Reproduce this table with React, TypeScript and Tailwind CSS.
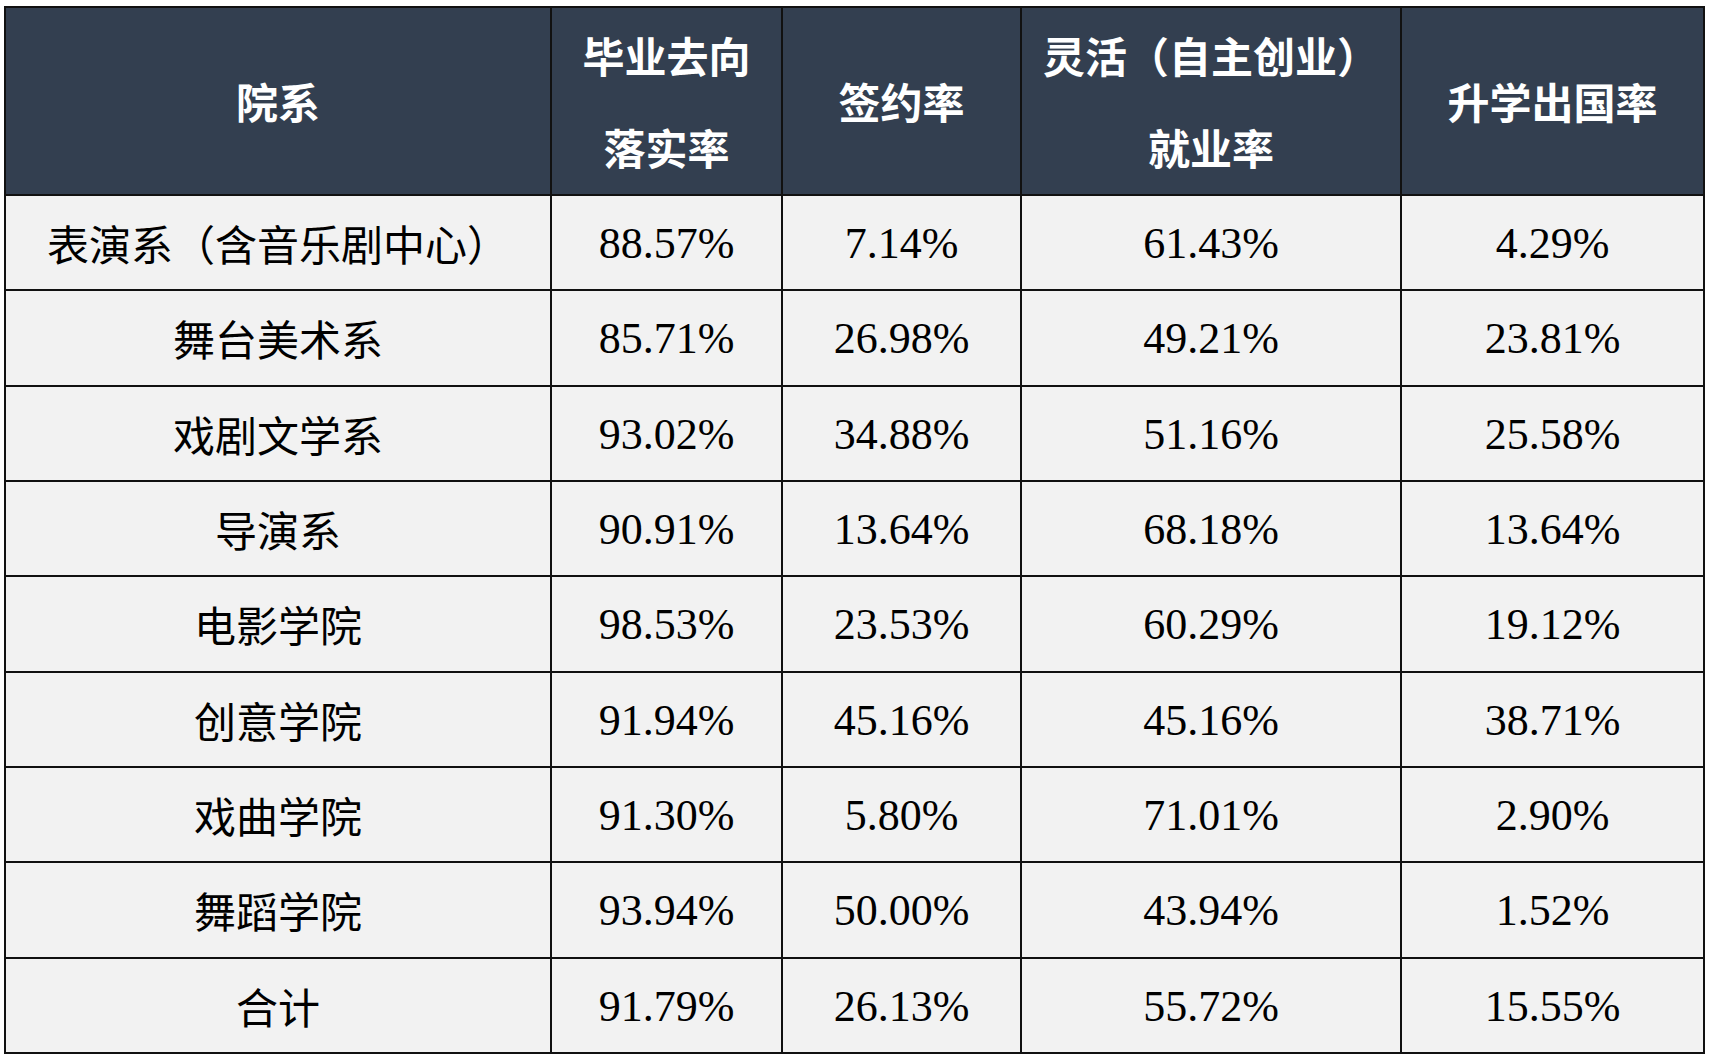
import React from "react";

const rows: [string, string, string, string, string][] = [
  ["表演系（含音乐剧中心）", "88.57%", "7.14%", "61.43%", "4.29%"],
  ["舞台美术系", "85.71%", "26.98%", "49.21%", "23.81%"],
  ["戏剧文学系", "93.02%", "34.88%", "51.16%", "25.58%"],
  ["导演系", "90.91%", "13.64%", "68.18%", "13.64%"],
  ["电影学院", "98.53%", "23.53%", "60.29%", "19.12%"],
  ["创意学院", "91.94%", "45.16%", "45.16%", "38.71%"],
  ["戏曲学院", "91.30%", "5.80%", "71.01%", "2.90%"],
  ["舞蹈学院", "93.94%", "50.00%", "43.94%", "1.52%"],
  ["合计", "91.79%", "26.13%", "55.72%", "15.55%"],
];

const headers: string[][] = [
  ["院系"],
  ["毕业去向", "落实率"],
  ["签约率"],
  ["灵活（自主创业）", "就业率"],
  ["升学出国率"],
];

const cjk = "font-['Noto_Sans_CJK_SC',sans-serif]";
const serif = "font-['Liberation_Serif','Times_New_Roman',serif]";

export default function App() {
  return (
    <div className="w-[1715px] h-[1061px] bg-white pl-[4px] pt-[6px]">
      <div className="w-[1701px] border-l-2 border-t-2 border-[#111111] grid grid-cols-[546px_231px_239px_380px_303px]">
        {headers.map((h, i) => (
          <div
            key={"h" + i}
            className={`h-[188px] bg-[#333f50] border-r-2 border-b-2 border-[#111111] flex flex-col items-center justify-center text-white font-bold text-[42px] leading-[92px] ${cjk}`}
          >
            {h.map((line, j) => (
              <div key={j}>{line}</div>
            ))}
          </div>
        ))}
        {rows.map((r, ri) =>
          r.map((c, ci) => (
            <div
              key={ri + "-" + ci}
              className={`h-[95.33px] bg-[#f2f2f2] border-r-2 border-b-2 border-[#111111] flex items-center justify-center text-black ${
                ci === 0 ? `${cjk} text-[42px]` : `${serif} text-[44px] pt-[3px]`
              }`}
            >
              {c}
            </div>
          ))
        )}
      </div>
    </div>
  );
}
